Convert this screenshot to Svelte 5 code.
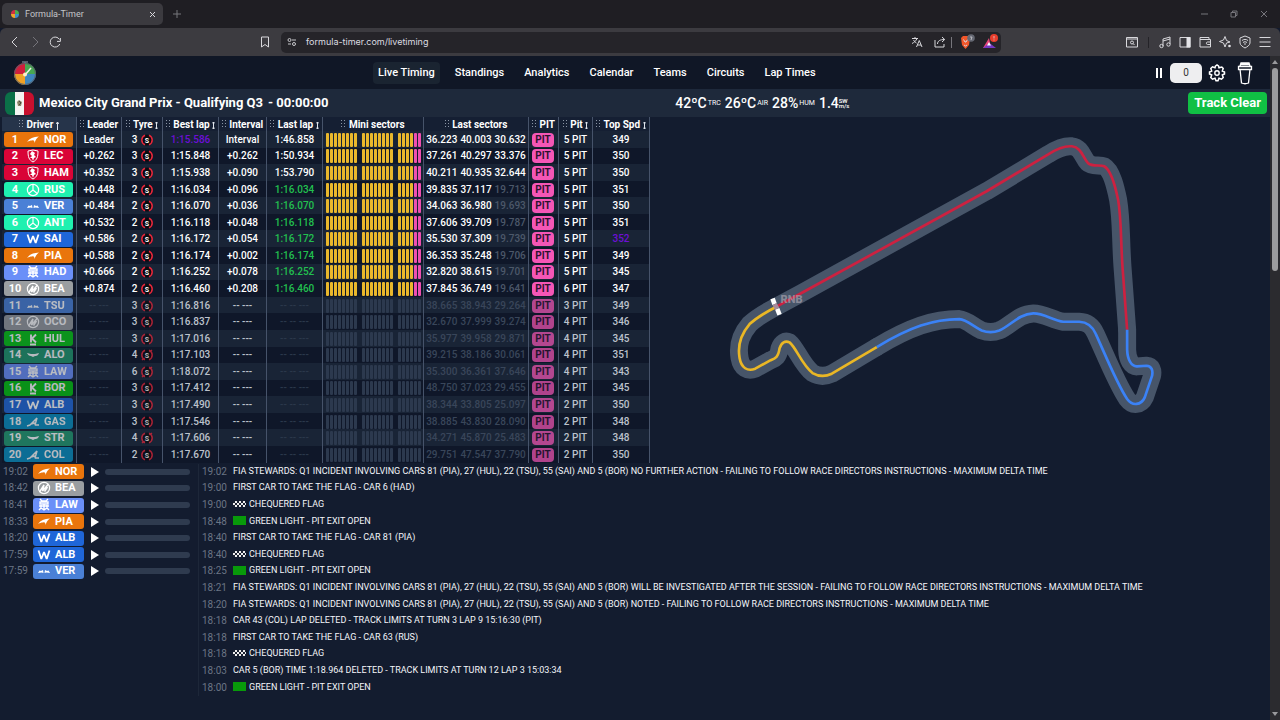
<script lang="ts">
  type Driver = {
    code: string;
    team: string;
    leader: string;
    tyre: number;
    best: string;
    interval: string;
    last: string;
    sectors: string[];
    pits: number;
    speed: number;
  };

  const tabs = ['Live Timing', 'Standings', 'Analytics', 'Calendar', 'Teams', 'Circuits', 'Lap Times'];

  const columns = [
    { key: 'driver', label: 'Driver', sort: 'up' },
    { key: 'leader', label: 'Leader', sort: '' },
    { key: 'tyre', label: 'Tyre', sort: 'both' },
    { key: 'best', label: 'Best lap', sort: 'both' },
    { key: 'interval', label: 'Interval', sort: '' },
    { key: 'last', label: 'Last lap', sort: 'both' },
    { key: 'mini', label: 'Mini sectors', sort: '' },
    { key: 'sectors', label: 'Last sectors', sort: '' },
    { key: 'pit', label: 'PIT', sort: '' },
    { key: 'pits', label: 'Pit', sort: 'both' },
    { key: 'speed', label: 'Top Spd', sort: 'both' }
  ];

  const rows: [string, string, string, number, string, string, string, string, number, number][] = [
    ['NOR', 'mclaren', 'Leader', 3, '1:15.586', 'Interval', '1:46.858', '36.223 40.003 30.632', 5, 349],
    ['LEC', 'ferrari', '+0.262', 3, '1:15.848', '+0.262', '1:50.934', '37.261 40.297 33.376', 5, 350],
    ['HAM', 'ferrari', '+0.352', 3, '1:15.938', '+0.090', '1:53.790', '40.211 40.935 32.644', 5, 350],
    ['RUS', 'mercedes', '+0.448', 2, '1:16.034', '+0.096', '1:16.034', '39.835 37.117 19.713', 5, 351],
    ['VER', 'redbull', '+0.484', 2, '1:16.070', '+0.036', '1:16.070', '34.063 36.980 19.693', 5, 350],
    ['ANT', 'mercedes', '+0.532', 2, '1:16.118', '+0.048', '1:16.118', '37.606 39.709 19.787', 5, 351],
    ['SAI', 'williams', '+0.586', 2, '1:16.172', '+0.054', '1:16.172', '35.530 37.309 19.739', 5, 352],
    ['PIA', 'mclaren', '+0.588', 2, '1:16.174', '+0.002', '1:16.174', '36.353 35.248 19.706', 5, 349],
    ['HAD', 'rb', '+0.666', 2, '1:16.252', '+0.078', '1:16.252', '32.820 38.615 19.701', 5, 345],
    ['BEA', 'haas', '+0.874', 2, '1:16.460', '+0.208', '1:16.460', '37.845 36.749 19.641', 6, 347],
    ['TSU', 'redbull', '', 3, '1:16.816', '', '', '38.665 38.943 29.264', 3, 349],
    ['OCO', 'haas', '', 3, '1:16.837', '', '', '32.670 37.999 39.274', 4, 346],
    ['HUL', 'sauber', '', 3, '1:17.016', '', '', '35.977 39.958 29.871', 4, 345],
    ['ALO', 'aston', '', 4, '1:17.103', '', '', '39.215 38.186 30.061', 4, 351],
    ['LAW', 'rb', '', 6, '1:18.072', '', '', '35.300 36.361 37.646', 4, 343],
    ['BOR', 'sauber', '', 3, '1:17.412', '', '', '48.750 37.023 29.455', 2, 345],
    ['ALB', 'williams', '', 3, '1:17.490', '', '', '38.344 33.805 25.097', 2, 350],
    ['GAS', 'alpine', '', 3, '1:17.546', '', '', '38.885 43.830 28.090', 2, 348],
    ['STR', 'aston', '', 4, '1:17.606', '', '', '34.271 45.870 25.483', 2, 348],
    ['COL', 'alpine', '', 2, '1:17.670', '', '', '29.751 47.547 37.790', 2, 350]
  ];

  const drivers: Driver[] = rows.map(([code, team, leader, tyre, best, interval, last, sectors, pits, speed]) => ({
    code, team, leader, tyre, best, interval, last, sectors: sectors.split(' '), pits, speed
  }));

  const miniGroups = [8, 8, 6];

  const radios = [
    { time: '19:02', code: 'NOR', team: 'mclaren' },
    { time: '18:42', code: 'BEA', team: 'haas' },
    { time: '18:41', code: 'LAW', team: 'rb' },
    { time: '18:33', code: 'PIA', team: 'mclaren' },
    { time: '18:20', code: 'ALB', team: 'williams' },
    { time: '17:59', code: 'ALB', team: 'williams' },
    { time: '17:59', code: 'VER', team: 'redbull' }
  ];

  const incident = 'FIA STEWARDS: Q1 INCIDENT INVOLVING CARS 81 (PIA), 27 (HUL), 22 (TSU), 55 (SAI) AND 5 (BOR)';
  const delta = 'FAILING TO FOLLOW RACE DIRECTORS INSTRUCTIONS - MAXIMUM DELTA TIME';

  const messages = [
    { time: '19:02', flag: '', text: `${incident} NO FURTHER ACTION - ${delta}` },
    { time: '19:00', flag: '', text: 'FIRST CAR TO TAKE THE FLAG - CAR 6 (HAD)' },
    { time: '19:00', flag: 'chequered', text: 'CHEQUERED FLAG' },
    { time: '18:48', flag: 'green', text: 'GREEN LIGHT - PIT EXIT OPEN' },
    { time: '18:40', flag: '', text: 'FIRST CAR TO TAKE THE FLAG - CAR 81 (PIA)' },
    { time: '18:40', flag: 'chequered', text: 'CHEQUERED FLAG' },
    { time: '18:25', flag: 'green', text: 'GREEN LIGHT - PIT EXIT OPEN' },
    { time: '18:21', flag: '', text: `${incident} WILL BE INVESTIGATED AFTER THE SESSION - ${delta}` },
    { time: '18:20', flag: '', text: `${incident} NOTED - ${delta}` },
    { time: '18:18', flag: '', text: 'CAR 43 (COL) LAP DELETED - TRACK LIMITS AT TURN 3 LAP 9 15:16:30 (PIT)' },
    { time: '18:18', flag: '', text: 'FIRST CAR TO TAKE THE FLAG - CAR 63 (RUS)' },
    { time: '18:18', flag: 'chequered', text: 'CHEQUERED FLAG' },
    { time: '18:03', flag: '', text: 'CAR 5 (BOR) TIME 1:18.964 DELETED - TRACK LIMITS AT TURN 12 LAP 3 15:03:34' },
    { time: '18:00', flag: 'green', text: 'GREEN LIGHT - PIT EXIT OPEN' }
  ];

  // circuit outline, split by sector
  const sector1 =
    'M170 560L240 522L800 214L985 103C1015 84 1035 77 1056 79C1086 83 1088 112 1104 129C1116 141 1140 134 1153 139C1176 152 1188 206 1195 240C1205 300 1202 350 1208 440L1222 630';
  const sector2 =
    'M1222 630L1222 690C1223 720 1235 741 1252 740L1280 738C1296 739 1300 752 1297 768L1275 833C1264 857 1238 860 1222 838C1190 790 1150 690 1128 643C1118 620 1104 607 1078 606L1030 606C1000 602 970 580 940 581C895 583 872 618 838 632Q812 642 785 632C758 620 742 600 718 598C640 598 570 622 470 682';
  const sector3 =
    'M470 682L335 762Q305 776 277 760C245 735 228 684 208 668C195 662 184 668 178 686C174 714 164 716 150 722L105 747C82 756 63 745 58 715C50 670 65 640 88 613Q115 588 170 560';

  let delay = $state(0);
</script>

{#snippet teamLogo(team: string)}
  <svg class="team-logo" viewBox="0 0 14 14" fill="none" stroke="currentColor" stroke-width="1.2" aria-hidden="true">
    {#if team === 'mclaren'}
      <path d="M1 9C4 5 7 4 13 3.500C11 5 10 6 8.500 10C8.500 8 8 7 6 7.500C4 7.500 3 8 1 9Z" fill="currentColor" stroke="none" />
    {:else if team === 'ferrari'}
      <path d="M2 2L7 1L12 2C12 8 11 11 7 13C3 11 2 8 2 2Z" stroke-width="1" />
      <path d="M6 2L9 4L8 6L10 8L8 9L7 12L6 9L4 9L6 7L4 5Z" fill="currentColor" stroke="none" />
    {:else if team === 'mercedes'}
      <circle cx="7" cy="7" r="5.6" />
      <path d="M7 2V7L2.8 10.5M7 7L11.2 10.5" />
    {:else if team === 'redbull'}
      <path d="M1 9L2.500 6.500L4 7L6 6L6.500 9L4.500 8.500ZM13 9L11.500 6.500L10 7L8 6L7.500 9L9.500 8.500Z" fill="currentColor" stroke="none" />
    {:else if team === 'williams'}
      <path d="M1.500 2.500L4.300 11L7 4L9.700 11L12.500 2.500" stroke-width="1.800" stroke-linejoin="bevel" />
    {:else if team === 'rb'}
      <path d="M3 1L5 3H9L11 1M3 4H11V6H3ZM2 8H12M4 7V10M7 6V12M10 7V10M2 12L4 10L7 12L10 10L12 12" stroke-width="1.4" />
    {:else if team === 'haas'}
      <circle cx="7" cy="7" r="5.600" />
      <path d="M2.500 11L7 4L5.500 10L11.500 3M7.500 10.500L10.500 6" stroke-width="1.400" stroke-linejoin="bevel" />
    {:else if team === 'sauber'}
      <path d="M5 2.500V10.500M10 2.500L6 6.500L10 10.500M4 12.500H10" stroke-width="1.900" stroke-linejoin="bevel" />
    {:else if team === 'aston'}
      <path d="M1 5L5 6H9L13 5C12 8 10 8 9 8L7 9L5 8C3 8 2 7 1 5Z" fill="currentColor" stroke="none" />
    {:else}
      <path d="M1 11L4 10L11 3L9 10H13M5 9L9 8" stroke-width="1.500" stroke-linejoin="bevel" />
    {/if}
  </svg>
{/snippet}

<div class="browser">
  <header class="chrome">
    <div class="tab-bar">
      <div class="tab">
        <svg class="favicon" viewBox="0 0 10 10" aria-hidden="true">
          <path d="M5 5V1A4 4 0 0 0 1 5Z" fill="#d22f43" />
          <path d="M5 5H9A4 4 0 0 0 5 1Z" fill="#4caf50" />
          <path d="M5 5V9A4 4 0 0 0 9 5Z" fill="#3f8fc8" />
          <path d="M5 5H1A4 4 0 0 0 5 9Z" fill="#f0a52a" />
        </svg>
        <span class="tab-title">Formula-Timer</span>
        <button type="button" class="plain" aria-label="Close tab">
          <svg width="7" height="7" viewBox="0 0 7 7"><path d="M1 1L6 6M6 1L1 6" /></svg>
        </button>
      </div>
      <button type="button" class="plain new-tab" aria-label="New tab">
        <svg width="8" height="8" viewBox="0 0 8 8"><path d="M4 0V8M0 4H8" /></svg>
      </button>
      <div class="window-controls">
        <button type="button" class="plain" aria-label="Minimize"><svg width="8" height="8" viewBox="0 0 8 8"><path d="M1 4H8" /></svg></button>
        <button type="button" class="plain" aria-label="Restore">
          <svg width="8" height="8" viewBox="0 0 8 8"><path d="M1 2.5H5.5V7H1ZM2.5 2.5V1H7V5.5H5.5" /></svg>
        </button>
        <button type="button" class="plain" aria-label="Close"><svg width="8" height="8" viewBox="0 0 8 8"><path d="M1 1L7 7M7 1L1 7" /></svg></button>
      </div>
    </div>

    <div class="toolbar">
      <div class="history">
        <button type="button" class="plain" aria-label="Back"><svg width="14" height="14" viewBox="0 0 14 14"><path d="M9 2L4 7L9 12" /></svg></button>
        <button type="button" class="plain muted" aria-label="Forward"><svg width="14" height="14" viewBox="0 0 14 14"><path d="M5 2L10 7L5 12" /></svg></button>
        <button type="button" class="plain" aria-label="Reload">
          <svg width="14" height="14" viewBox="0 0 14 14"><path d="M11.8 9A5 5 0 1 1 11.5 4.5M12.4 3V6.4H9" /></svg>
        </button>
      </div>
      <button type="button" class="plain bookmark" aria-label="Bookmark">
        <svg width="14" height="14" viewBox="0 0 14 14"><path d="M3.5 2H10.500V12L7 9.500L3.500 12Z" /></svg>
      </button>
      <div class="address">
        <svg width="10" height="10" viewBox="0 0 10 10" fill="none" stroke="#c8c8cc"><circle cx="2.500" cy="3" r="1.500" /><circle cx="7" cy="7" r="1.500" /><path d="M5 3H9M1 7H4" /></svg>
        <span class="url">formula-timer.com/livetiming</span>
        <div class="address-tools">
          <button type="button" class="plain" aria-label="Translate">
            <svg width="12" height="12" viewBox="0 0 12 12"><path d="M1 2.500H7M4 1V2.500M6 2.500C5 5 3 6.500 1 7.500M2.500 4C3.500 5.500 4.500 6.500 5.500 7M5.500 11L8.250 4.500L11 11M6.500 9H10" /></svg>
          </button>
          <button type="button" class="plain share" aria-label="Share">
            <svg width="12" height="12" viewBox="0 0 12 12"><path d="M1 4V11H10V8M3.500 8C3.500 5 6 3.500 10.500 3.500M8 1L10.700 3.500L8 6" /></svg>
          </button>
          <span class="divider"></span>
          <button type="button" class="plain shield" aria-label="Shields">
            <svg width="16" height="16" viewBox="0 0 16 16"><path class="lion" d="M2 4L4 2H9L11 4L10 11L6.500 15L3 11Z" /><path d="M4.500 5.500L6 8H7L8.500 5.500M5 11L6.500 12L8 11" /><circle cx="12" cy="4" r="3.800" fill="#656873" stroke="none" /><path d="M11 3H13L12 6" stroke-width="0.700" /></svg>
          </button>
          <button type="button" class="plain shield" aria-label="Rewards">
            <svg width="16" height="16" viewBox="0 0 16 16"><path fill="#e6447a" stroke="none" d="M1 14L7 4L9 14Z" /><path fill="#7438c4" stroke="none" d="M1 14L7.500 9L14 14Z" /><path fill="#fff" stroke="none" d="M7 8L9 11.500H5Z" /><circle cx="12" cy="4" r="4" fill="#e83d2c" stroke="none" /><path d="M12 2V4.500M12 5.500V6.500" stroke-width="0.800" /></svg>
          </button>
        </div>
      </div>
      <div class="extensions">
        <button type="button" class="plain" aria-label="Search tabs"><svg width="14" height="14" viewBox="0 0 14 14"><path d="M1.500 2.500H12.500V12H1.500ZM1.500 4H12.500" /><circle cx="7" cy="7.500" r="1.500" /><path d="M8 8.500L9.500 10" /></svg></button>
        <span class="divider dark"></span>
        <button type="button" class="plain" aria-label="Media"><svg width="14" height="14" viewBox="0 0 14 14"><path d="M5 11V4L12 2V9M5 6L12 4" /><circle cx="3.500" cy="11" r="1.700" /><circle cx="10.500" cy="9.500" r="1.700" /></svg></button>
        <button type="button" class="plain" aria-label="Side panel"><svg width="14" height="14" viewBox="0 0 14 14"><path d="M2 2.500H12V12H2Z" /><path class="solid" d="M8.500 2H12.500V12.500H8.500Z" /></svg></button>
        <button type="button" class="plain" aria-label="Wallet"><svg width="14" height="14" viewBox="0 0 14 14"><path d="M11 4.500V2.500H2V12H12.500V4.500H2M12.500 7H9.500C8 7 8 9.500 9.500 9.500H12.500" /></svg></button>
        <button type="button" class="plain" aria-label="Assistant"><svg width="14" height="14" viewBox="0 0 14 14"><path d="M7 1.500L8.500 5.500L12 7L8.500 8L7 12L5.500 8L1.500 6.500L5.500 5Z" /><circle class="solid" cx="11.500" cy="11" r="1.300" /></svg></button>
        <button type="button" class="plain" aria-label="VPN"><svg width="14" height="14" viewBox="0 0 14 14"><path d="M7 1L12 3V8C12 10 9 12 7 13C5 12 2 10 2 8V3ZM4 5.500C6 4 8 4 10 5.500M5 7.500C6.500 6.500 7.500 6.500 9 7.500" /><circle class="solid" cx="7" cy="9" r="0.800" /></svg></button>
        <button type="button" class="plain" aria-label="Menu"><svg width="14" height="14" viewBox="0 0 14 14"><path d="M1.500 2.500H12.500M1.500 7H12.500M1.500 11.500H12.500" /></svg></button>
      </div>
    </div>
  </header>

  <div class="viewport">
    <div class="page">
      <nav class="site-nav">
        <a class="logo" href="/" aria-label="Formula-Timer home">
          <svg width="24" height="28" viewBox="0 0 24 28">
            <path d="M12 5V3M9 3H15" stroke="#6b7280" stroke-width="1.500" />
            <path d="M12 15V4A11 11 0 0 0 1 15Z" fill="#cf1f3c" />
            <path d="M12 15H23A11 11 0 0 0 12 4Z" fill="#47a851" />
            <path d="M12 15V26A11 11 0 0 0 23 15Z" fill="#3f87bf" />
            <path d="M12 15H1A11 11 0 0 0 12 26Z" fill="#f0a126" />
            <circle cx="12" cy="15" r="10.500" fill="none" stroke="#59616b" />
            <path d="M12 16L18 9" stroke="#f3f4e8" stroke-width="1.500" />
            <circle cx="12" cy="15.500" r="2" fill="#fff0c8" />
          </svg>
        </a>
        <div class="links">
          {#each tabs as tab, i}
            <a href="#{tab.toLowerCase().replace(' ', '-')}" class:active={i === 0}>{tab}</a>
          {/each}
        </div>
        <div class="tools">
          <button type="button" class="plain" aria-label="Pause"><svg width="10" height="12" viewBox="0 0 10 12"><path class="pause" d="M3 1V11M7 1V11" /></svg></button>
          <input class="delay" type="text" inputmode="numeric" aria-label="Delay in seconds" bind:value={delay} />
          <button type="button" class="plain" aria-label="Settings">
            <svg width="18" height="18" viewBox="0 0 18 18"><path d="M7.500 2L9 1L10.500 2L11 3.800L13.800 3L15.200 4.500L14.300 7L16.500 8V10L14.300 11L15.200 13.500L13.500 15.200L11 14.200L10 16.700H8L7 14.200L4.500 15.200L2.800 13.500L3.700 11L1.500 10V8L3.700 7L2.800 4.500L4.500 2.800L7 3.800Z" stroke-width="1.500" /><circle cx="9" cy="9" r="2.200" stroke-width="1.400" /></svg>
          </button>
          <a class="coffee" href="#support" aria-label="Support the project">
            <svg width="16" height="24" viewBox="0 0 16 24" fill="none" stroke="#fff" stroke-width="1.300"><path d="M3 8L4.500 22Q8 23.500 11.500 22L13 8M1.500 5.500H14.500V8.500H1.500ZM3 5L4 2H12L13 5M4 3.500H12" /></svg>
          </a>
        </div>
      </nav>

      <div class="session">
        <div class="title">
          <svg class="flag" viewBox="0 0 29 23" role="img" aria-label="Mexico">
            <path d="M0 0H10V23H0Z" fill="#0b7148" />
            <path d="M10 0H19V23H10Z" fill="#f4f4f2" />
            <path d="M19 0H29V23H19Z" fill="#c8102e" />
            <path d="M12 10L14 8L17 10L16 14L13 14Z" fill="#8a8468" />
            <path d="M14 9L16 11L14 13" stroke="#4d4a3c" fill="none" />
          </svg>
          <h1>Mexico City Grand Prix - Qualifying Q3</h1>
          <span class="clock">- 00:00:00</span>
        </div>
        <div class="weather">
          <span>42ºC<small>TRC</small></span>
          <span>26ºC<small>AIR</small></span>
          <span>28%<small>HUM</small></span>
          <span>1.4<small class="wind"><b>SW</b><b>m/s</b></small></span>
        </div>
        <span class="status">Track Clear</span>
      </div>

      <main class="board">
        <table class="timing">
          <colgroup>
            {#each columns as column}
              <col class="col-{column.key}" />
            {/each}
          </colgroup>
          <thead>
            <tr>
              {#each columns as column}
                <th scope="col" class:sorted={column.sort === 'up'}>
                  <svg class="grip" width="5" height="8" viewBox="0 0 5 8"><path d="M0 0H1V1H0ZM3 0H4V1H3ZM0 3H1V4H0ZM3 3H4V4H3ZM0 6H1V7H0ZM3 6H4V7H3Z" /></svg>
                  {column.label}
                  {#if column.sort}
                    <svg class="sort" width="3" height="9" viewBox="0 0 3 9"><path d={column.sort === 'up' ? 'M1.500 9V1M0 3L1.500 1L3 3' : 'M1.500 8V1M0 2.500L1.500 1L3 2.500M0 6.500L1.500 8L3 6.500'} /></svg>
                  {/if}
                </th>
              {/each}
            </tr>
          </thead>
          <tbody>
            {#each drivers as d, i}
              <tr class:out={i > 9}>
                <td>
                  <div class="chip {d.team}">
                    <span class="pos">{i + 1}</span>
                    {@render teamLogo(d.team)}
                    <span>{d.code}</span>
                  </div>
                </td>
                <td class:faint={!d.leader}>{d.leader || '-- ---'}</td>
                <td>
                  <div class="tyre">
                    {d.tyre}
                    <svg width="12" height="12" viewBox="0 0 12 12">
                      <circle cx="6" cy="6" r="5.500" fill="#0b0b10" />
                      <path d="M4 1.200A5.200 5.200 0 0 0 4 10.800M8 1.200A5.200 5.200 0 0 1 8 10.800" fill="none" stroke="#e8283c" stroke-width="1.500" />
                      {#if d.tyre > 3}
                        <path d="M1 11L3.500 9M8.500 3L11 1" stroke="#e8283c" stroke-width="1.500" />
                      {/if}
                      <text x="6" y="8.500" text-anchor="middle">S</text>
                    </svg>
                  </div>
                </td>
                <td class:purple={i === 0}>{d.best}</td>
                <td>{d.interval || '-- ---'}</td>
                <td class:green={i > 2 && i < 10} class:faint={!d.last}>{d.last || '-- -- ---'}</td>
                <td>
                  <div class="mini">
                    {#each miniGroups as count, g}
                      <div class="mini-group">
                        {#each { length: count } as _, n}
                          <i class:pink={g === 2 && n > 3}></i>
                        {/each}
                      </div>
                    {/each}
                  </div>
                </td>
                <td>
                  <div class="sectors">
                    {#each d.sectors as sector, s}
                      <span class:faint={i > 9 || (i > 2 && s === 2)}>{sector}</span>
                    {/each}
                  </div>
                </td>
                <td><span class="pit">PIT</span></td>
                <td>{d.pits} PIT</td>
                <td class:purple={d.speed === 352}>{d.speed}</td>
              </tr>
            {/each}
          </tbody>
        </table>

        <div class="map">
          <svg viewBox="-210 -9 1860 1038" role="img" aria-label="Circuit map">
            <g fill="none" stroke-linecap="round" stroke-linejoin="round">
              <g stroke="#475569" stroke-width="54">
                <path d={sector1} /><path d={sector2} /><path d={sector3} />
              </g>
              <g stroke-width="8" stroke-linecap="butt">
                <path d={sector1} stroke="#cd2140" />
                <path d={sector2} stroke="#3b82f6" />
                <path d={sector3} stroke="#eab725" />
              </g>
            </g>
            <path d="M157 536L163 553M171 567L178 585" stroke="#fff" stroke-width="14" />
            <path d="M163 553L171 567" stroke="#a88b9b" stroke-width="14" />
            <text x="181" y="551">RNB</text>
          </svg>
        </div>
      </main>

      <section class="feeds">
        <ul class="radio">
          {#each radios as r}
            <li>
              <time>{r.time}</time>
              <span class="chip {r.team}">{@render teamLogo(r.team)}<span>{r.code}</span></span>
              <button type="button" class="plain play" aria-label="Play {r.code} {r.time}">
                <svg width="10" height="10" viewBox="0 0 10 10"><path d="M1 0L9 5L1 10Z" /></svg>
              </button>
              <span class="progress"></span>
            </li>
          {/each}
        </ul>
        <ul class="messages">
          {#each messages as m}
            <li>
              <time>{m.time}</time>
              <p>
                {#if m.flag}<span class="marker {m.flag}"></span>{/if}{m.text}
              </p>
            </li>
          {/each}
        </ul>
      </section>
    </div>

    <div class="scrollbar" aria-hidden="true">
      <svg width="6" height="4" viewBox="0 0 6 4"><path d="M0 4L3 0L6 4Z" /></svg>
      <span class="thumb"></span>
      <svg width="6" height="4" viewBox="0 0 6 4"><path d="M0 0L3 4L6 0Z" /></svg>
    </div>
  </div>
</div>

<style>
  :global(body) {
    background: #131b2e;
  }

  .browser {
    display: flex;
    flex-direction: column;
    height: 100vh;
    overflow: hidden;
    color: #fff;
    font-family: Roboto, 'Liberation Sans', sans-serif;
    font-size: 10px;
    line-height: 14px;
  }

  h1,
  p,
  ul {
    margin: 0;
    padding: 0;
    list-style: none;
  }

  a {
    color: inherit;
    text-decoration: none;
  }

  .plain {
    display: grid;
    place-items: center;
    padding: 0;
    border: 0;
    background: none;
    cursor: pointer;
  }

  .plain svg {
    fill: none;
    stroke: #d8d8dc;
  }

  .plain .solid {
    fill: #e4e4e8;
    stroke: none;
  }

  /* browser frame */
  .tab-bar {
    display: flex;
    align-items: center;
    height: 28px;
    background: #1f1e23;
  }

  .tab {
    display: flex;
    align-items: center;
    gap: 5px;
    box-sizing: border-box;
    width: 161px;
    height: 22px;
    margin-left: 2px;
    padding: 0 7px 0 8px;
    border-radius: 5px;
    background: #3b3a3f;
    color: #c4c4c8;
    font-size: 9px;
  }

  .favicon {
    width: 10px;
    height: 10px;
  }

  .tab-title {
    flex: 1;
  }

  .new-tab {
    margin-left: 10px;
  }

  .new-tab svg,
  .window-controls svg {
    stroke: #77767c;
  }

  .window-controls {
    display: flex;
    gap: 22px;
    margin: 0 12px 0 auto;
  }

  .toolbar {
    display: flex;
    align-items: center;
    height: 28px;
    border-radius: 6px 6px 0 0;
    background: #3c3b40;
  }

  .history {
    display: flex;
    gap: 6px;
    padding-left: 8px;
  }

  .muted svg {
    stroke: #75747a;
  }

  .bookmark {
    margin: 0 9px 0 auto;
  }

  .address {
    display: flex;
    flex: 0 1 720px;
    align-items: center;
    gap: 9px;
    box-sizing: border-box;
    height: 21px;
    padding: 0 3px 0 6px;
    border-radius: 5px;
    background: #252429;
  }

  .url {
    flex: 1;
    color: #dcdce0;
    font-family: Inter, 'Liberation Sans', sans-serif;
    font-size: 9px;
  }

  .address-tools,
  .extensions {
    display: flex;
    align-items: center;
  }

  .address-tools {
    gap: 7px;
  }

  .address-tools .share {
    margin: 0 -2px 0 4px;
  }

  .shield .lion {
    fill: #f0562a;
    stroke: none;
  }

  .divider {
    width: 1px;
    height: 11px;
    background: #77767c;
  }

  .divider.dark {
    background: #242328;
  }

  .extensions {
    gap: 6px;
    margin-left: 124px;
    padding-right: 8px;
  }

  .extensions .divider {
    margin: 0 3px;
  }

  /* page */
  .viewport {
    display: flex;
    flex: 1;
    min-height: 0;
  }

  .page {
    display: flex;
    flex: 1;
    flex-direction: column;
    min-width: 0;
    background: #131c2f;
  }

  .scrollbar {
    display: flex;
    flex-direction: column;
    align-items: center;
    width: 10px;
    padding: 4px 0;
    box-sizing: border-box;
    background: #2b2b2f;
  }

  .scrollbar svg {
    fill: #9a9a9c;
  }

  .thumb {
    width: 6px;
    height: 31%;
    margin: 4px 0 auto;
    border-radius: 3px;
    background: #9d9d9e;
  }

  .site-nav {
    display: grid;
    grid-template-columns: 373px auto 1fr;
    align-items: center;
    height: 33px;
    background: #101726;
  }

  .logo {
    display: flex;
    padding-left: 13px;
  }

  .links {
    display: flex;
    gap: 10px;
  }

  .links a {
    padding: 4px 5px;
    border-radius: 4px;
    font-size: 11px;
    font-weight: 500;
  }

  .links .active {
    background: #1a2431;
  }

  .tools {
    display: flex;
    align-items: center;
    justify-content: flex-end;
    gap: 6px;
    padding-right: 17px;
  }

  .tools svg {
    stroke: #fff;
  }

  .tools .pause {
    stroke-width: 2;
  }

  .delay {
    box-sizing: border-box;
    width: 32px;
    height: 20px;
    padding: 0;
    border: 0;
    border-radius: 5px;
    background: #eeeef0;
    color: #333;
    font: 10px Roboto, sans-serif;
    text-align: center;
  }

  .coffee {
    display: flex;
    padding-left: 5px;
  }

  .session {
    display: flex;
    align-items: center;
    justify-content: space-between;
    height: 28px;
    padding: 0 3px 0 5px;
    background: #1e293b;
  }

  .title {
    display: flex;
    align-items: center;
    gap: 5px;
    padding-right: 8px;
  }

  .flag {
    width: 29px;
    height: 23px;
    border-radius: 6px;
  }

  h1,
  .clock {
    font-size: 13px;
    font-weight: 700;
    line-height: 16px;
  }

  .weather {
    display: flex;
    gap: 4px;
    font-size: 14px;
    font-weight: 500;
  }

  .weather span {
    display: flex;
    align-items: center;
  }

  .weather small {
    padding-left: 1px;
    font-size: 7px;
    font-weight: 400;
  }

  .weather .wind {
    display: grid;
    padding: 0;
    font-size: 6px;
    line-height: 5px;
  }

  .wind b {
    font-weight: 500;
  }

  .status {
    padding: 4px 6px;
    border-radius: 4px;
    background: #10c044;
    font-size: 13px;
    font-weight: 700;
  }

  /* timing board */
  .board {
    display: flex;
    height: 48vh;
  }

  .timing {
    width: 648px;
    height: 100%;
    margin-left: 2px;
    border-collapse: separate;
    border-spacing: 0;
    table-layout: fixed;
    font-weight: 500;
    text-align: center;
    white-space: nowrap;
  }

  .col-driver { width: 75px; }
  .col-leader { width: 45px; }
  .col-tyre { width: 41px; }
  .col-best { width: 56px; }
  .col-interval { width: 48px; }
  .col-last { width: 56px; }
  .col-mini { width: 101px; }
  .col-sectors { width: 105px; }
  .col-pit { width: 30px; }
  .col-pits { width: 34px; }
  .col-speed { width: 57px; }

  th {
    height: 14px;
    padding: 0;
    border-right: 1px solid #46536a;
    background: #151f33;
    font-weight: 700;
    line-height: 13px;
  }

  th.sorted {
    background: #26344a;
  }

  .grip {
    fill: #8b95a5;
  }

  .sort {
    fill: none;
    stroke: #dfe4ec;
    vertical-align: -2px;
  }

  td {
    padding: 1px 0 0;
    border-right: 1px solid #46536a;
    background: #0f1729;
  }

  tbody tr:nth-child(odd) td {
    background: #192436;
  }

  .purple {
    color: #6d0fd6;
  }

  .green {
    color: #22c04f;
  }

  .faint {
    color: #4c586a;
  }

  .chip {
    display: flex;
    align-items: center;
    box-sizing: border-box;
    height: 15px;
    border-radius: 3px;
    font-size: 11px;
    font-weight: 700;
  }

  td .chip {
    margin: 0 3px 0 2px;
  }

  .pos {
    width: 22px;
  }

  .team-logo {
    width: 14px;
    height: 14px;
    flex: none;
    margin-right: 4px;
  }

  .mclaren { background: #e9750c; }
  .ferrari { background: #d90437; }
  .mercedes { background: #1ff0b0; }
  .redbull { background: #4a80d6; }
  .williams { background: #1f66d8; }
  .rb { background: #6a8ff8; }
  .haas { background: #9a9ea1; }
  .sauber { background: #07c512; }
  .aston { background: #22996f; }
  .alpine { background: #0c93c4; }

  .tyre {
    display: flex;
    align-items: center;
    justify-content: center;
    gap: 4px;
    padding-left: 1px;
  }

  .tyre text {
    fill: #fff;
    font-size: 7px;
    font-weight: 700;
  }

  .mini {
    display: flex;
    gap: 5px;
    justify-content: center;
  }

  .mini-group {
    display: flex;
    gap: 1px;
  }

  .mini i {
    width: 3px;
    height: 14px;
    border-radius: 1px;
    background: #e9b72c;
  }

  .mini .pink {
    background: #ee4fb0;
  }

  .sectors {
    display: flex;
    justify-content: center;
    gap: 3px;
  }

  .pit {
    display: block;
    margin: 0 4px 0 3px;
    border-radius: 4px;
    background: #f556b6;
    color: #2c1230;
    font-weight: 700;
  }

  .out td {
    color: #bcc2cc;
  }

  .out .chip {
    color: #fff;
  }

  .out .chip,
  .out .tyre svg,
  .out .pit {
    opacity: 0.7;
  }

  .out .faint {
    color: #39465a;
  }

  .out td.faint {
    color: #2b384b;
  }

  .out .mini i {
    background: #2c394e;
  }

  .map {
    flex: 1;
    min-width: 0;
  }

  .map svg {
    display: block;
    width: 100%;
    height: 100%;
  }

  .map text {
    fill: #a8a0ac;
    fill-opacity: 0.7;
    font-size: 33px;
    font-weight: 900;
  }

  /* team radio and race control */
  .feeds {
    display: flex;
    flex: 1;
    min-height: 0;
    padding: 1px 0 24px;
  }

  .radio,
  .messages {
    display: grid;
    grid-template-rows: repeat(14, minmax(0, 1fr));
  }

  .radio {
    width: 198px;
    border-right: 1px solid #1d2739;
  }

  .messages {
    flex: 1;
  }

  .feeds li {
    display: flex;
    align-items: center;
  }

  time {
    width: 30px;
    padding-left: 3px;
    color: #6b7585;
  }

  .radio .chip {
    width: 51px;
    padding-left: 4px;
  }

  .messages time {
    width: 31px;
  }

  .play {
    margin: 0 5px 0 6px;
  }

  .play svg {
    fill: #fff;
    stroke: none;
  }

  .progress {
    flex: 1;
    height: 6px;
    margin-right: 8px;
    border-radius: 3px;
    background: #2f3b4f;
  }

  .messages p {
    display: flex;
    align-items: center;
    gap: 3px;
    padding-bottom: 2px;
    color: #f4f6fa;
    font-size: 9px;
    white-space: nowrap;
  }

  .marker {
    width: 13px;
    height: 9px;
    background: #089a0a;
  }

  .marker.chequered {
    height: 6px;
    background: repeating-conic-gradient(#eee 0 25%, #1b2231 0 50%) 0 0 / 4px 4px;
  }
</style>
